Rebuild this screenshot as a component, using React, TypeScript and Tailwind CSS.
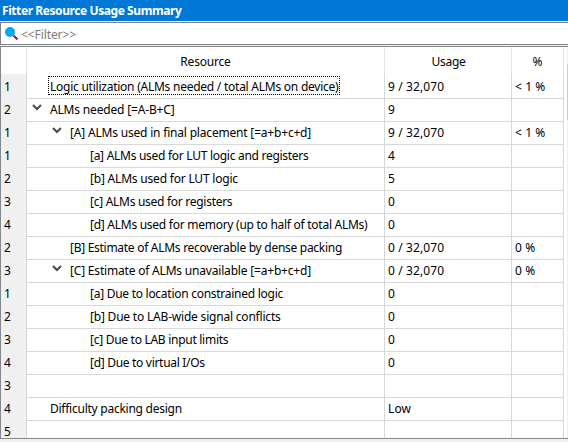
type Row = { n: string; level: number; text: string; track?: string; open?: boolean; focus?: boolean; usage?: string; pct?: string };

const rows: Row[] = [
  { n: '1', level: 0, text: 'Logic utilization (ALMs needed / total ALMs on device)', track: 'tracking-[-0.245px]', focus: true, usage: '9 / 32,070', pct: '< 1 %' },
  { n: '2', level: 0, text: 'ALMs needed [=A-B+C]', track: 'tracking-[-0.17px]', open: true, usage: '9' },
  { n: '1', level: 1, text: '[A] ALMs used in final placement [=a+b+c+d]', track: 'tracking-[-0.19px]', open: true, usage: '9 / 32,070', pct: '< 1 %' },
  { n: '1', level: 2, text: '[a] ALMs used for LUT logic and registers', track: 'tracking-[-0.28px]', usage: '4' },
  { n: '2', level: 2, text: '[b] ALMs used for LUT logic', track: 'tracking-[-0.2px]', usage: '5' },
  { n: '3', level: 2, text: '[c] ALMs used for registers', track: 'tracking-[-0.28px]', usage: '0' },
  { n: '4', level: 2, text: '[d] ALMs used for memory (up to half of total ALMs)', track: 'tracking-[-0.265px]', usage: '0' },
  { n: '2', level: 1, text: '[B] Estimate of ALMs recoverable by dense packing', track: 'tracking-[-0.28px]', usage: '0 / 32,070', pct: '0 %' },
  { n: '3', level: 1, text: '[C] Estimate of ALMs unavailable [=a+b+c+d]', track: 'tracking-[-0.19px]', open: true, usage: '0 / 32,070', pct: '0 %' },
  { n: '1', level: 2, text: '[a] Due to location constrained logic', track: 'tracking-[-0.27px]', usage: '0' },
  { n: '2', level: 2, text: '[b] Due to LAB-wide signal conflicts', track: 'tracking-[-0.2px]', usage: '0' },
  { n: '3', level: 2, text: '[c] Due to LAB input limits', track: 'tracking-[-0.28px]', usage: '0' },
  { n: '4', level: 2, text: '[d] Due to virtual I/Os', track: 'tracking-[-0.3px]', usage: '0' },
  { n: '3', level: 0, text: '' },
  { n: '4', level: 0, text: 'Difficulty packing design', track: 'tracking-[-0.25px]', usage: 'Low' },
  { n: '5', level: 0, text: '' },
];

const indents = ['pl-[3px]', 'pl-[23px]', 'pl-[43px]'];

function Chevron() {
  return (
    <svg width="10" height="7" viewBox="0 0 10 7" fill="none" className="mb-[3px]">
      <path d="M1 1 L5 5 L9 1" stroke="#4a4a4a" strokeWidth="2" />
    </svg>
  );
}

function TableRow({ row }: { row: Row }) {
  return (
    <div className="grid h-[23px] shrink-0 grid-cols-[26px_358px_127px_52px] leading-[22px]">
      <div className="border-r border-b border-[#d8d8d8] bg-[#f0f0f0] pt-[2px] pl-[3px]">{row.n}</div>
      <div className={`flex border-r border-b border-[#d8d8d8] ${indents[row.level]}`}>
        <div className="flex w-5 shrink-0 items-center pl-[2px]">{row.open && <Chevron />}</div>
        {row.focus ? (
          <div className={`-ml-[2px] mt-[2px] h-[19px] w-[292px] border border-dotted border-black pl-px leading-[20px] ${row.track}`}>{row.text}</div>
        ) : (
          <div className={`pt-[2px] ${row.track ?? ''}`}>{row.text}</div>
        )}
      </div>
      <div className="border-r border-b border-[#d8d8d8] pt-[2px] pl-[3px] tracking-[0.1px]">{row.usage}</div>
      <div className="border-r border-b border-[#d8d8d8] pt-[2px] pl-[3px] tracking-[0.1px]">{row.pct}</div>
    </div>
  );
}

export default function App() {
  return (
    <div className="flex h-[442px] w-[568px] flex-col overflow-hidden bg-[#f0f0f0] font-['Noto_Sans',sans-serif] text-[12px] whitespace-pre text-black">
      <div className="h-[21px] shrink-0 bg-[#0078d7] pl-[2px] text-[12px] leading-[22px] font-bold tracking-[-0.42px] text-white">Fitter Resource Usage Summary</div>
      <div className="mt-px flex h-[23px] shrink-0 items-center border-y border-l border-[#828282] bg-white pl-[4px] text-[#7a7a7a]">
        <svg width="13" height="13" viewBox="0 0 13 13" className="mr-[3px]">
          <path d="M8.5 8.5 L12.5 12.5" stroke="#b51218" strokeWidth="2" />
          <circle cx="5" cy="5" r="5" fill="#03a9f4" />
        </svg>
        <span className="pt-[2px] tracking-[-0.1px]">{'<<Filter>>'}</span>
      </div>
      <div className="mt-px flex h-[393px] shrink-0 border-y border-l border-[#828790] bg-white">
        <div className="flex h-[391px] w-[563px] flex-col overflow-hidden">
          <div className="grid h-[27px] shrink-0 grid-cols-[26px_358px_127px_52px] text-center leading-[30px]">
            <div className="border-r border-[#e5e5e5]" />
            <div className="border-r border-[#e5e5e5] tracking-[-0.2px]">Resource</div>
            <div className="border-r border-[#e5e5e5] pl-px tracking-[-0.3px]">Usage</div>
            <div className="border-r border-[#e5e5e5]">%</div>
          </div>
          {rows.map((row, i) => <TableRow key={i} row={row} />)}
        </div>
        <div className="ml-[3px] w-px bg-[#f0f0f0] pt-[17px]">
          <div className="h-[56px] bg-[#cdcdcd]" />
        </div>
      </div>
    </div>
  );
}
